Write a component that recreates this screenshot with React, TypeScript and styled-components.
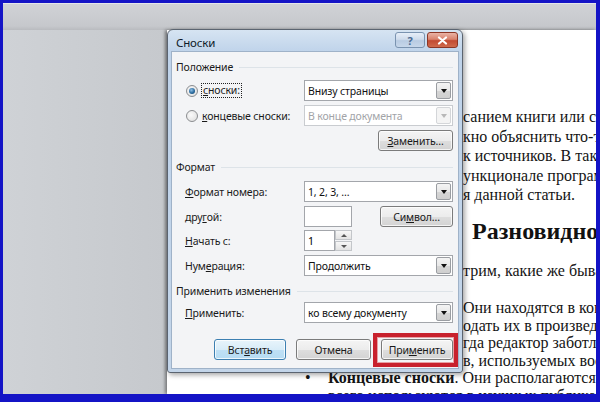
import React from "react";
import styled, { createGlobalStyle, css } from "styled-components";

const GlobalStyle = createGlobalStyle`
  html, body {
    margin: 0;
    padding: 0;
    width: 600px;
    height: 402px;
    overflow: hidden;
  }
`;

const Screen = styled.div`
  position: relative;
  box-sizing: border-box;
  width: 600px;
  height: 402px;
  border-style: solid;
  border-color: #1414c6;
  border-width: 3px 4px 8px 3px;
  overflow: hidden;
  display: flex;
  flex-direction: column;
  background: linear-gradient(to right, #cfd2d6 0%, #c5c8cc 30%, #c7cacd 100%);
`;

const TopStrip = styled.div`
  height: 27px;
  border-top: 1px solid #e4e6ea;
  box-sizing: border-box;
  background: linear-gradient(to bottom, #d0d2d6, #c6c8cc 85%, #b9bbbf);
`;

const Workspace = styled.div`
  flex: 1;
  display: flex;
  padding-left: 164px;
  min-height: 0;
`;

const Page = styled.div`
  flex: 1;
  background: #fff;
  box-shadow: -2px 0 3px rgba(0, 0, 0, 0.4);
  padding-top: 77px;
  overflow: hidden;
  font-family: "Liberation Serif", "DejaVu Serif", serif;
  font-size: 16px;
  color: #141414;
`;

const Para = styled.div<{ $lh: number; $top?: number }>`
  padding-left: 296px;
  line-height: ${(p) => p.$lh}px;
  margin-top: ${(p) => p.$top ?? 0}px;
  white-space: nowrap;
`;

const Heading = styled.div`
  padding-left: 305px;
  margin-top: 12px;
  font-size: 24px;
  line-height: 28px;
  font-weight: bold;
  white-space: nowrap;
  color: #111;
`;

const BulletRow = styled.div`
  display: flex;
  padding-left: 138px;
  line-height: 17.5px;
  white-space: nowrap;
`;

const Bullet = styled.span`
  width: 23px;
  flex: none;
`;

/* ---------- dialog ---------- */

const Dialog = styled.div`
  position: absolute;
  left: 164px;
  top: 26px;
  width: 296px;
  height: 344px;
  box-sizing: border-box;
  border: 1px solid #5b6470;
  border-radius: 6px 6px 3px 3px;
  background: linear-gradient(to bottom, #d6e4f2 0, #bfd3ea 22px, #c3d5e9 100%);
  box-shadow: 2px 2px 5px rgba(0, 0, 0, 0.35);
  padding: 0 4px 4px;
  display: flex;
  flex-direction: column;
  font-family: "Noto Sans", "Liberation Sans", sans-serif;
  font-size: 10.5px;
  letter-spacing: -0.15px;
  color: #000;
`;

const TitleBar = styled.div`
  height: 22px;
  display: flex;
  justify-content: space-between;
  padding-left: 4px;
`;

const Title = styled.span`
  font-size: 11.5px;
  line-height: 26px;
  color: #0e1a2a;
`;

const Caption = styled.div`
  display: flex;
  gap: 2px;
  margin-top: 2px;
`;

const CapButton = styled.div<{ $close?: boolean }>`
  width: ${(p) => (p.$close ? 31 : 30)}px;
  height: 16px;
  box-sizing: border-box;
  border-radius: 3px;
  display: flex;
  align-items: center;
  justify-content: center;
  font-weight: bold;
  font-size: 11px;
  ${(p) =>
    p.$close
      ? css`
          border: 1px solid #8b3626;
          background: linear-gradient(to bottom, #eab3a5 0%, #d8826d 45%, #c24a32 55%, #cf6a4c 100%);
        `
      : css`
          border: 1px solid #7a93b0;
          background: linear-gradient(to bottom, #e6eef8 0%, #cfdcec 45%, #b8cbe2 55%, #c7d7ea 100%);
          color: #4a6a91;
        `}
`;

const Client = styled.div`
  flex: 1;
  background: #f3f4f6;
  box-shadow: 0 0 0 1px #9fb2c8;
  padding: 0 5px 0 4px;
  display: flex;
  flex-direction: column;
`;

const GroupTitle = styled.div<{ $top: number }>`
  margin-top: ${(p) => p.$top}px;
  height: 14px;
  line-height: 14px;
  display: flex;
  align-items: center;
  color: #1a1a1a;

  &::after {
    content: "";
    flex: 1;
    margin-left: 6px;
    border-top: 1px solid #dde3e8;
  }
`;

const Row = styled.div<{ $top: number; $indent?: number }>`
  margin-top: ${(p) => p.$top}px;
  height: 21px;
  display: flex;
  align-items: center;
  padding-left: ${(p) => p.$indent ?? 9}px;
`;

const Label = styled.div<{ $w?: number }>`
  width: ${(p) => p.$w ?? 119}px;
  flex: none;
  display: flex;
  align-items: center;
  gap: 3px;
  color: #1a1a1a;
`;

const Controls = styled.div`
  flex: 1;
  display: flex;
  justify-content: space-between;
  align-items: center;
`;

const Radio = styled.span<{ $checked?: boolean }>`
  position: relative;
  width: 12px;
  height: 12px;
  box-sizing: border-box;
  border-radius: 50%;
  border: 1px solid #8b8d90;
  background: radial-gradient(circle at 40% 40%, #fafafa 0%, #dcdcdc 100%);
  flex: none;
  margin-right: 1px;

  ${(p) =>
    p.$checked &&
    css`
      &::after {
        content: "";
        position: absolute;
        left: 2px;
        top: 2px;
        width: 6px;
        height: 6px;
        border-radius: 50%;
        background: radial-gradient(circle at 40% 35%, #8fc0e6 0%, #2a6a9e 55%, #0f3d63 100%);
      }
    `}
`;

const Focus = styled.span`
  outline: 1px dotted #222;
  outline-offset: 0;
  padding: 0 1px;
  line-height: 13px;
`;

const SelectBox = styled.div<{ $disabled?: boolean; $w?: number }>`
  width: ${(p) => p.$w ?? 149}px;
  height: 21px;
  box-sizing: border-box;
  border: 1px solid ${(p) => (p.$disabled ? "#c9ccd0" : "#a3a6ab")};
  background: #fff;
  display: flex;
  align-items: center;
  padding: 1px;
  color: ${(p) => (p.$disabled ? "#a2a4a8" : "#111")};
`;

const SelectText = styled.span`
  flex: 1;
  padding-left: 2px;
  white-space: nowrap;
`;

const Arrow = styled.span<{ $disabled?: boolean }>`
  width: 15px;
  height: 17px;
  box-sizing: border-box;
  border: 1px solid ${(p) => (p.$disabled ? "#d4d6d9" : "#9a9da2")};
  border-radius: 2px;
  background: ${(p) =>
    p.$disabled
      ? "#f4f4f4"
      : "linear-gradient(to bottom, #f4f4f4 0%, #e8e8e8 50%, #d6d6d6 51%, #cfcfcf 100%)"};
  display: flex;
  align-items: center;
  justify-content: center;

  &::after {
    content: "";
    border-style: solid;
    border-width: 4px 3.5px 0 3.5px;
    border-color: ${(p) => (p.$disabled ? "#b8b8b8" : "#111")} transparent transparent transparent;
  }
`;

const TextField = styled.div<{ $w: number }>`
  width: ${(p) => p.$w}px;
  height: 21px;
  box-sizing: border-box;
  border: 1px solid #a3a6ab;
  background: #fff;
  display: flex;
  align-items: center;
  padding-left: 3px;
`;

const Spinner = styled.div`
  width: 48px;
  height: 21px;
  display: flex;
`;

const SpinInput = styled(TextField)`
  flex: 1;
`;

const SpinButtons = styled.div`
  width: 17px;
  display: flex;
  flex-direction: column;
  gap: 1px;
`;

const SpinButton = styled.span<{ $down?: boolean }>`
  flex: 1;
  border: 1px solid #c3c6ca;
  background: linear-gradient(to bottom, #f7f7f7, #e3e3e3);
  display: flex;
  align-items: center;
  justify-content: center;

  &::after {
    content: "";
    border-style: solid;
    border-width: ${(p) => (p.$down ? "3px 3px 0 3px" : "0 3px 3px 3px")};
    border-color: ${(p) =>
      p.$down ? "#555 transparent transparent transparent" : "transparent transparent #555 transparent"};
  }
`;

const Button = styled.div<{ $w?: number; $default?: boolean }>`
  width: ${(p) => p.$w ?? 73}px;
  height: 21px;
  box-sizing: border-box;
  border-radius: 3px;
  display: flex;
  align-items: center;
  justify-content: center;
  color: #1a1a1a;
  box-shadow: inset 0 0 0 1px rgba(255, 255, 255, 0.75);
  ${(p) =>
    p.$default
      ? css`
          border: 1px solid #3c7fb1;
          background: linear-gradient(to bottom, #e8f4fb 0%, #d8ecf8 50%, #bfe0f5 51%, #b6dcf3 100%);
        `
      : css`
          border: 1px solid #7b7b7b;
          background: linear-gradient(to bottom, #f4f4f4 0%, #ececec 50%, #dedede 51%, #d3d3d3 100%);
        `}
`;

const RightRow = styled.div<{ $top: number }>`
  margin-top: ${(p) => p.$top}px;
  display: flex;
  justify-content: flex-end;
`;

const Footer = styled.div`
  margin-top: 16px;
  display: flex;
  justify-content: flex-end;
  gap: 10px;
`;

const Highlight = styled.div`
  position: relative;

  &::after {
    content: "";
    position: absolute;
    left: -8px;
    top: -6px;
    right: -5px;
    bottom: -7px;
    border: 4px solid #c8212d;
    box-shadow: inset 0 0 0 1px #e7a0a4;
  }
`;

const CloseIcon = () => (
  <svg width="11" height="9" viewBox="0 0 11 9">
    <path d="M2 1.5 L9 7.5 M9 1.5 L2 7.5" stroke="#fff" strokeWidth="2.2" strokeLinecap="round" />
  </svg>
);

const Select: React.FC<{ value: string; disabled?: boolean }> = ({ value, disabled }) => (
  <SelectBox $disabled={disabled}>
    <SelectText>{value}</SelectText>
    <Arrow $disabled={disabled} />
  </SelectBox>
);

const FootnoteDialog = () => (
  <Dialog>
    <TitleBar>
      <Title>Сноски</Title>
      <Caption>
        <CapButton>?</CapButton>
        <CapButton $close>
          <CloseIcon />
        </CapButton>
      </Caption>
    </TitleBar>
    <Client>
      <GroupTitle $top={8}>Положение</GroupTitle>
      <Row $top={6} $indent={10}>
        <Label $w={118}>
          <Radio $checked />
          <Focus>
            <u>с</u>носки:
          </Focus>
        </Label>
        <Select value="Внизу страницы" />
      </Row>
      <Row $top={4} $indent={10}>
        <Label $w={118}>
          <Radio />
          <span>
            <u>к</u>онцевые сноски:
          </span>
        </Label>
        <Select value="В конце документа" disabled />
      </Row>
      <RightRow $top={4}>
        <Button $w={75}>
          <span>
            <u>З</u>аменить...
          </span>
        </Button>
      </RightRow>

      <GroupTitle $top={9}>Формат</GroupTitle>
      <Row $top={7}>
        <Label>
          <span>
            <u>Ф</u>ормат номера:
          </span>
        </Label>
        <Select value="1, 2, 3, ..." />
      </Row>
      <Row $top={4}>
        <Label>
          <span>
            дру<u>г</u>ой:
          </span>
        </Label>
        <Controls>
          <TextField $w={48} />
          <Button>
            <span>
              Си<u>м</u>вол...
            </span>
          </Button>
        </Controls>
      </Row>
      <Row $top={3}>
        <Label>
          <span>
            <u>Н</u>ачать с:
          </span>
        </Label>
        <Spinner>
          <SpinInput $w={31}>1</SpinInput>
          <SpinButtons>
            <SpinButton />
            <SpinButton $down />
          </SpinButtons>
        </Spinner>
      </Row>
      <Row $top={4}>
        <Label>
          <span>
            Нум<u>е</u>рация:
          </span>
        </Label>
        <Select value="Продолжить" />
      </Row>

      <GroupTitle $top={8}>Применить изменения</GroupTitle>
      <Row $top={4}>
        <Label>
          <span>
            <u>П</u>рименить:
          </span>
        </Label>
        <Select value="ко всему документу" />
      </Row>

      <Footer>
        <Button $w={72} $default>
          <span>
            Вст<u>а</u>вить
          </span>
        </Button>
        <Button $w={75}>Отмена</Button>
        <Highlight>
          <Button $w={72}>
            <span>
              При<u>м</u>енить
            </span>
          </Button>
        </Highlight>
      </Footer>
    </Client>
  </Dialog>
);

export default function App() {
  return (
    <>
      <GlobalStyle />
      <Screen>
        <TopStrip />
        <Workspace>
          <Page>
            <Para $lh={19.5}>
              <div>санием книги или статьи</div>
              <div>кно объяснить что-то</div>
              <div>к источников. В таких</div>
              <div>ункционале программы</div>
              <div>я данной статьи.</div>
            </Para>
            <Heading>Разновидности сносок</Heading>
            <Para $lh={19.5} $top={16}>
              трим, какие же бывают сноски
            </Para>
            <Para $lh={17.5} $top={19}>
              <div>Они находятся в конце</div>
              <div>одать их в произведение</div>
              <div>гда редактор заботливо</div>
              <div>в, используемых вообще</div>
            </Para>
            <BulletRow>
              <Bullet>•</Bullet>
              <span>
                <b>Концевые сноски</b>. Они располагаются в конце
              </span>
            </BulletRow>
            <BulletRow>
              <Bullet />
              <span>всего используются в научных публикациях</span>
            </BulletRow>
          </Page>
        </Workspace>
        <FootnoteDialog />
      </Screen>
    </>
  );
}
